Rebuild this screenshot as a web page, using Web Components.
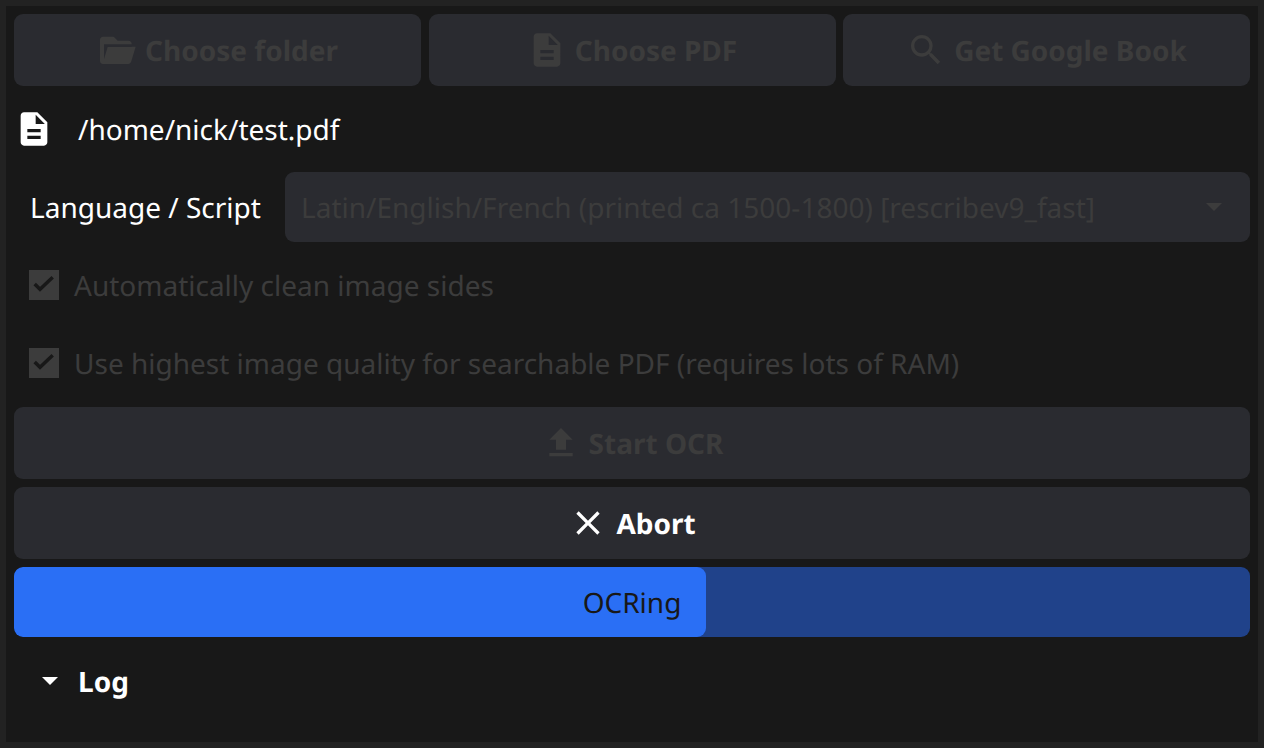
<!DOCTYPE html>
<html>
<head>
<meta charset="utf-8">
<title>OCR</title>
<style>
  html, body { margin: 0; height: 100%; }
  body {
    background: #181818;
    color: #fff;
    font-family: "Noto Sans", sans-serif;
    font-size: 28px;
    text-rendering: geometricPrecision;
  }
</style>
</head>
<body>
<ocr-window>
  <ocr-toolbar>
    <ocr-button icon="folder" disabled>Choose folder</ocr-button>
    <ocr-button icon="file" disabled>Choose PDF</ocr-button>
    <ocr-button icon="search" disabled>Get Google Book</ocr-button>
  </ocr-toolbar>
  <ocr-file-row>/home/nick/test.pdf</ocr-file-row>
  <ocr-select label="Language / Script">Latin/English/French (printed ca 1500-1800) [rescribev9_fast]</ocr-select>
  <ocr-check>Automatically clean image sides</ocr-check>
  <ocr-check>Use highest image quality for searchable PDF (requires lots of RAM)</ocr-check>
  <ocr-button icon="upload" disabled style="margin-top:1px">Start OCR</ocr-button>
  <ocr-button icon="close">Abort</ocr-button>
  <ocr-progress value="56">OCRing</ocr-progress>
  <ocr-expander>Log</ocr-expander>
</ocr-window>

<script>
const ICONS = {
  folder: `<path fill-rule="evenodd" d="M3.6 4H10l2.4 2.4H19c1 0 1.8.8 1.8 1.8V10h2.4l-2.6 8.8c-.3 1-1 1.6-1.9 1.6H3.6c-1 0-1.8-.8-1.8-1.8V5.8C1.800 4.800 2.600 4 3.600 4zM4.200 8.600V17.500L6.400 10.200H20.800V8.600z"/>`,
  file: `<path fill-rule="evenodd" d="M14 2H6c-1.1 0-2 .9-2 2v16c0 1.1.9 2 2 2h12c1.1 0 2-.9 2-2V8l-6-6zM13 9V3.500L18.500 9H13zM8 12h8v2H8v-2zm0 4h8v2H8v-2z"/>`,
  search: `<path d="M15.5 14h-.79l-.28-.27A6.47 6.47 0 0 0 16 9.5 6.5 6.5 0 1 0 9.5 16c1.61 0 3.09-.59 4.23-1.57l.27.28v.79l5 4.99L20.49 19l-4.99-5zm-6 0C7.01 14 5 11.99 5 9.5S7.01 5 9.5 5 14 7.01 14 9.5 11.99 14 9.5 14z"/>`,
  upload: `<path d="M9 16h6v-6h4l-7-7-7 7h4v6zm-4 2h14v2H5v-2z"/>`,
  close: `<path d="M19 6.41 17.59 5 12 10.59 6.41 5 5 6.41 10.59 12 5 17.59 6.41 19 12 13.41 17.59 19 19 17.59 13.41 12z"/>`
};

class OcrWindow extends HTMLElement {
  constructor() {
    super();
    this.attachShadow({ mode: "open" });
    this.shadowRoot.innerHTML = `
    <style>
      :host {
        display: flex;
        flex-direction: column;
        gap: 8px;
        box-sizing: border-box;
        height: 748px;
        padding: 8px;
        border: 6px solid #222222;
        background: #181818;
      }
    </style>
    <slot></slot>`;
  }
}

class OcrToolbar extends HTMLElement {
  constructor() {
    super();
    this.attachShadow({ mode: "open" });
    this.shadowRoot.innerHTML = `
    <style>
      :host {
        display: grid;
        grid-template-columns: repeat(3, 407px);
        column-gap: 7.5px;
      }
    </style>
    <slot></slot>`;
  }
}

class OcrButton extends HTMLElement {
  constructor() {
    super();
    this.attachShadow({ mode: "open" });
    const icon = ICONS[this.getAttribute("icon")] || "";
    this.shadowRoot.innerHTML = `
    <style>
      :host {
        display: flex;
        align-items: center;
        justify-content: center;
        gap: 8px;
        height: 72px;
        border-radius: 9px;
        background: #2a2b30;
        color: #fff;
        font-weight: 700;
        font-size: 28px;
      }
      :host([disabled]) { color: #3c3c3c; }
      svg { width: 40px; height: 40px; fill: currentColor; flex: none; }
      span { padding-top: 2px; }
    </style>
    <svg viewBox="0 0 24 24">${icon}</svg>
    <span><slot></slot></span>`;
  }
}

class OcrFileRow extends HTMLElement {
  constructor() {
    super();
    this.attachShadow({ mode: "open" });
    this.shadowRoot.innerHTML = `
    <style>
      :host {
        display: flex;
        align-items: center;
        height: 70px;
        color: #fff;
      }
      svg { width: 40px; height: 40px; fill: currentColor; flex: none; }
      span { margin-left: 24px; padding-top: 2px; }
    </style>
    <svg viewBox="0 0 24 24">${ICONS.file}</svg>
    <span><slot></slot></span>`;
  }
}

class OcrSelect extends HTMLElement {
  constructor() {
    super();
    this.attachShadow({ mode: "open" });
    this.shadowRoot.innerHTML = `
    <style>
      :host {
        display: flex;
        align-items: center;
        height: 70px;
      }
      label { margin-left: 16px; width: 255px; flex: none; color: #fff; padding-top: 2px; }
      .box {
        flex: 1;
        height: 70px;
        display: flex;
        align-items: center;
        justify-content: space-between;
        padding: 0 28px 0 16px;
        box-sizing: border-box;
        border-radius: 9px;
        background: #2a2b30;
        color: #3c3c3c;
      }
      span { padding-top: 2px; }
      .arrow {
        width: 0;
        height: 0;
        border-left: 8px solid transparent;
        border-right: 8px solid transparent;
        border-top: 8px solid #3c3c3c;
      }
    </style>
    <label>${this.getAttribute("label")}</label>
    <div class="box"><span><slot></slot></span><i class="arrow"></i></div>`;
  }
}

class OcrCheck extends HTMLElement {
  constructor() {
    super();
    this.attachShadow({ mode: "open" });
    this.shadowRoot.innerHTML = `
    <style>
      :host {
        display: flex;
        align-items: center;
        height: 70px;
        color: #3c3c3c;
      }
      .mark {
        width: 30px;
        height: 30px;
        margin-left: 15px;
        margin-right: 15px;
        background: #3c3c3c;
        flex: none;
        display: flex;
      }
      svg { width: 30px; height: 30px; }
      span { padding-top: 2px; }
    </style>
    <div class="mark"><svg viewBox="0 0 30 30"><path d="M5.700 14 11 19.300 23.700 7.300" fill="none" stroke="#181818" stroke-width="3.500"/></svg></div>
    <span><slot></slot></span>`;
  }
}

class OcrProgress extends HTMLElement {
  constructor() {
    super();
    this.attachShadow({ mode: "open" });
    const value = this.getAttribute("value");
    this.shadowRoot.innerHTML = `
    <style>
      :host {
        display: block;
        position: relative;
        height: 70px;
        border-radius: 9px;
        background: #20428a;
        overflow: hidden;
      }
      .fill {
        height: 100%;
        width: ${value}%;
        background: #2a6ff5;
        border-radius: 9px;
      }
      .label {
        position: absolute;
        inset: 2px 0 0;
        display: flex;
        align-items: center;
        justify-content: center;
        color: #181818;
      }
    </style>
    <div class="fill"></div>
    <div class="label"><slot></slot></div>`;
  }
}

class OcrExpander extends HTMLElement {
  constructor() {
    super();
    this.attachShadow({ mode: "open" });
    this.shadowRoot.innerHTML = `
    <style>
      :host {
        display: flex;
        align-items: center;
        height: 72px;
        color: #fff;
        font-weight: 700;
      }
      .arrow {
        width: 0;
        height: 0;
        margin-left: 28px;
        border-left: 8px solid transparent;
        border-right: 8px solid transparent;
        border-top: 8px solid #fff;
      }
      span { margin-left: 20px; padding-top: 2px; }
    </style>
    <i class="arrow"></i>
    <span><slot></slot></span>`;
  }
}

customElements.define("ocr-window", OcrWindow);
customElements.define("ocr-toolbar", OcrToolbar);
customElements.define("ocr-button", OcrButton);
customElements.define("ocr-file-row", OcrFileRow);
customElements.define("ocr-select", OcrSelect);
customElements.define("ocr-check", OcrCheck);
customElements.define("ocr-progress", OcrProgress);
customElements.define("ocr-expander", OcrExpander);
</script>
</body>
</html>
